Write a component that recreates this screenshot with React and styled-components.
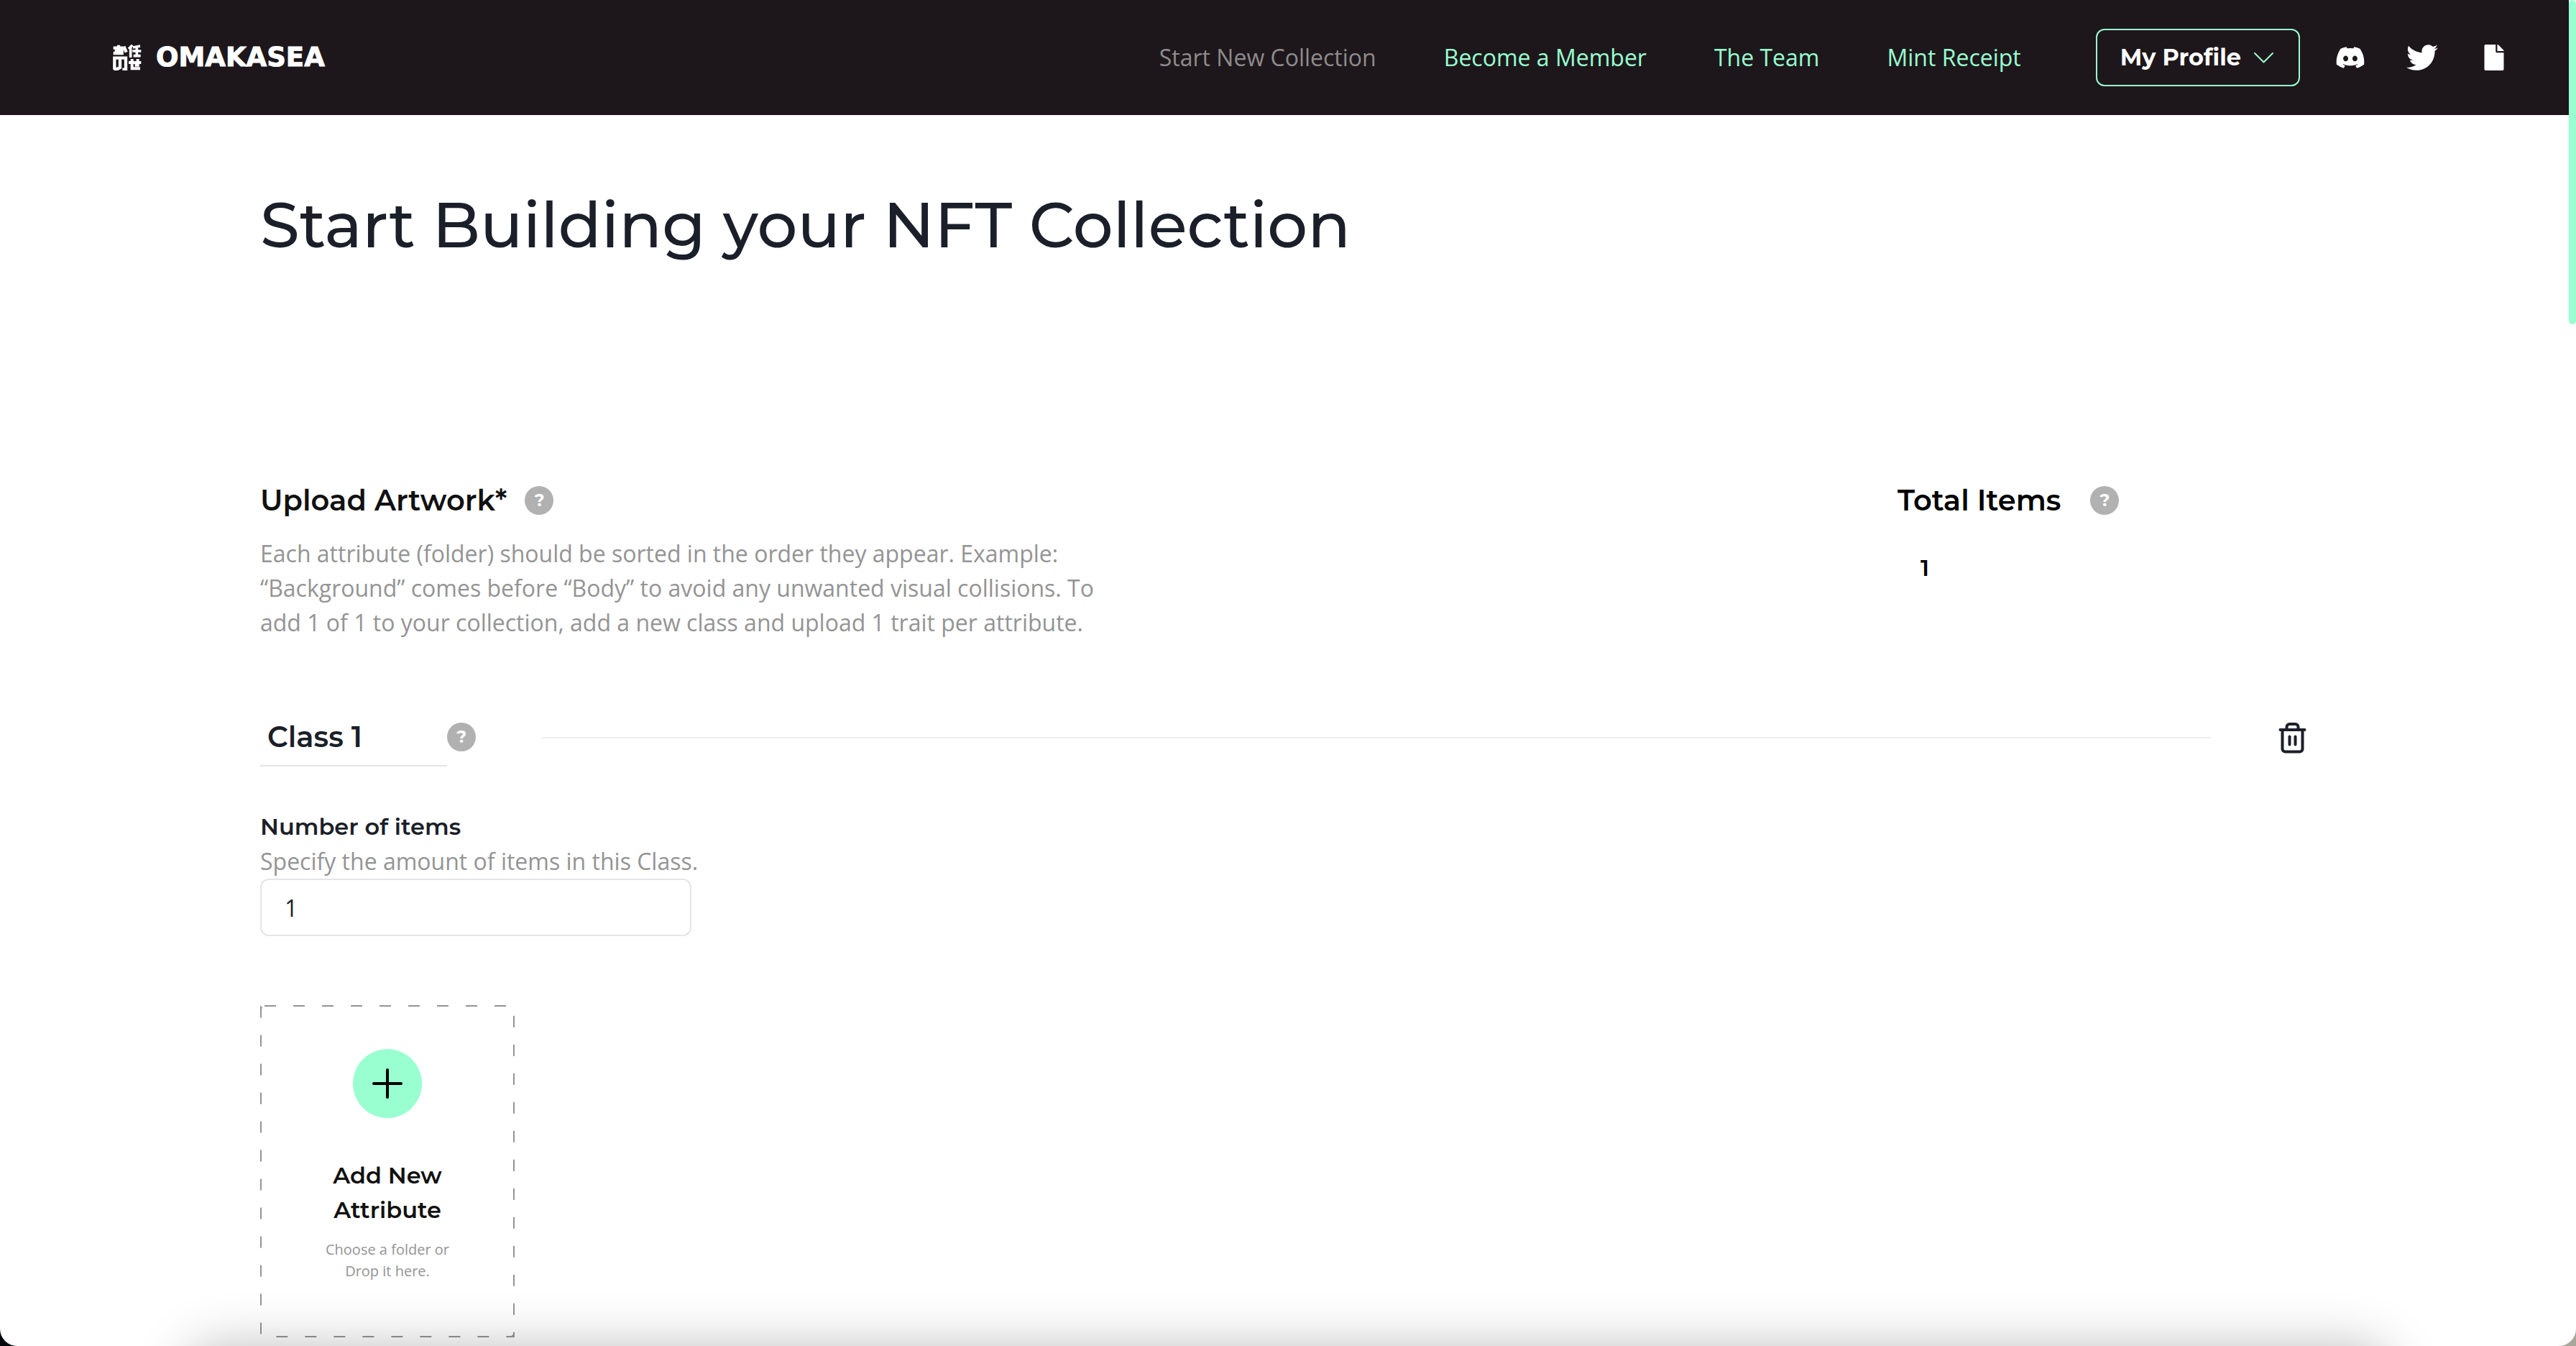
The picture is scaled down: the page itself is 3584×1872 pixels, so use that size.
import React, { useState } from "react";
import styled, { createGlobalStyle } from "styled-components";
import { FaDiscord, FaTwitter, FaFile } from "react-icons/fa";

const mint = "#99ffd0";
const ink = "#1b1f29";
const muted = "#949494";
const heading = `"Montserrat", "Inter", sans-serif`;
const body = `"Open Sans", "Noto Sans", sans-serif`;

const GlobalStyle = createGlobalStyle`
  *, *::before, *::after { box-sizing: border-box; }
  html { background: linear-gradient(to right, #05080d 50%, #a8a79a 50%); }
  body { margin: 0; font-family: ${body}; font-size: 32px; line-height: 48px; color: ${ink}; }
  h1, h2, p { margin: 0; }
  button, input { font: inherit; color: inherit; }
  button { cursor: pointer; }
`;

const Window = styled.div`
  position: relative;
  height: 100vh;
  overflow: hidden;
  padding-right: 10px;
  background: #fff;
  border-radius: 0 0 24px 24px;
`;

const ScrollThumb = styled.div`
  position: absolute;
  top: 0;
  right: 0;
  width: 10px;
  height: 451px;
  border-radius: 5px;
  background: ${mint};
`;

const BottomShade = styled.div`
  position: absolute;
  top: 100%;
  left: 260px;
  right: 260px;
  height: 200px;
  border-radius: 40px;
  box-shadow: 0 0 70px rgba(0, 0, 0, 0.25);
  pointer-events: none;
`;

const Header = styled.header`
  display: flex;
  align-items: center;
  height: 160px;
  padding: 0 54px 0 157px;
  background: #1d171b;
`;

const Logo = styled.a`
  display: flex;
  align-items: center;
  gap: 20px;
  margin-right: auto;
  color: #fff;
  text-decoration: none;
`;

const LogoName = styled.span`
  font-family: "DejaVu Sans", sans-serif;
  font-size: 37px;
  font-weight: 700;
  -webkit-text-stroke: 1px #fff;
`;

const Nav = styled.nav`
  display: flex;
  gap: 94px;
  margin-right: 104px;
`;

const NavLink = styled.a`
  color: ${(p) => (p.$current ? "#8e8b8d" : mint)};
  text-decoration: none;
  white-space: nowrap;
`;

const ProfileButton = styled.button`
  display: flex;
  align-items: center;
  gap: 18px;
  height: 80px;
  margin-right: 20px;
  padding: 0 35px 0 32px;
  border: 2px solid ${mint};
  border-radius: 12px;
  background: transparent;
  color: #fff;
  font-family: ${heading};
  font-weight: 700;
  white-space: nowrap;
`;

const SocialLink = styled.a`
  display: flex;
  justify-content: center;
  width: 100px;
  color: #fff;
`;

const Main = styled.main`
  padding: 105px 362px 12px;
`;

const Title = styled.h1`
  margin-bottom: 311px;
  font-family: ${heading};
  font-size: 88px;
  font-weight: 500;
  line-height: 96px;
`;

const Intro = styled.section`
  display: grid;
  grid-template-columns: 1fr 572px;
  margin-bottom: 94px;
`;

const HeadingRow = styled.div`
  display: flex;
  align-items: center;
  gap: ${(p) => p.$gap}px;
`;

const SectionTitle = styled.h2`
  font-family: ${heading};
  font-size: 40px;
  font-weight: 600;
  line-height: 48px;
  color: ${(p) => p.$color};
`;

const HelpButton = styled.button`
  flex: none;
  width: 40px;
  height: 40px;
  padding: 0;
  border: 0;
  border-radius: 50%;
  background: #b1b1b1;
  color: #fff;
  font-family: ${heading};
  font-size: 24px;
  font-weight: 700;
  line-height: 40px;
`;

const Description = styled.p`
  max-width: 1180px;
  margin-top: 26px;
  color: ${muted};
`;

const TotalValue = styled.p`
  margin-top: 46px;
  padding-left: 32px;
  color: #000;
  font-family: ${heading};
  font-weight: 600;
`;

const ClassRow = styled.div`
  display: flex;
  align-items: center;
  margin-bottom: 60px;
`;

const ClassNameInput = styled.input`
  width: 260px;
  height: 82px;
  padding: 0 10px;
  border: 0;
  border-bottom: 2px solid #e3e5e6;
  background: transparent;
  font-family: ${heading};
  font-size: 40px;
  font-weight: 600;
  outline: none;
`;

const Rule = styled.hr`
  flex: 1;
  height: 2px;
  margin: 2px 90px 0 92px;
  border: 0;
  background: #eeeeee;
`;

const TrashButton = styled.button`
  display: flex;
  padding: 0;
  border: 0;
  background: none;
`;

const Field = styled.div`
  display: flex;
  flex-direction: column;
  align-items: flex-start;
  margin-bottom: 96px;
`;

const FieldLabel = styled.label`
  font-family: ${heading};
  font-weight: 600;
`;

const FieldHint = styled.p`
  color: ${muted};
`;

const CountInput = styled.input`
  width: 600px;
  height: 80px;
  padding: 0 32px;
  border: 2px solid #e3e5e8;
  border-radius: 12px;
  background: #fff;
  outline: none;
`;

const DropZone = styled.button`
  position: relative;
  display: flex;
  flex-direction: column;
  align-items: center;
  width: 354px;
  height: 462px;
  padding: 61px 60px 0;
  border: 0;
  background: none;
`;

const DashedBorder = styled.svg`
  position: absolute;
  inset: 0;
  width: 100%;
  height: 100%;
  overflow: hidden;
`;

const PlusCircle = styled.span`
  display: flex;
  align-items: center;
  justify-content: center;
  width: 96px;
  height: 96px;
  margin-bottom: 56px;
  border-radius: 50%;
  background: ${mint};
`;

const DropTitle = styled.span`
  width: 200px;
  margin-bottom: 16px;
  color: #111;
  font-family: ${heading};
  font-weight: 600;
`;

const DropHint = styled.span`
  width: 190px;
  color: ${muted};
  font-size: 20px;
  line-height: 30px;
`;

const links = ["Start New Collection", "Become a Member", "The Team", "Mint Receipt"];
const socials = [
  { name: "Discord", icon: <FaDiscord size={42} /> },
  { name: "Twitter", icon: <FaTwitter size={44} /> },
  { name: "Documentation", icon: <FaFile size={36} /> },
];

function LogoMark() {
  return (
    <svg width="40" height="36" viewBox="0 0 120 108" fill="none" stroke="#fff" strokeWidth="11" aria-hidden="true">
      <path d="M2 14h42M24 2v34M2 36h36V27H8M46 8l10 24" strokeWidth="13" />
      <path d="M82 2L66 18M74 12v42M114 6L84 12M82 27h36M100 8v40M86 47h30" />
      <path d="M7 104V56h47v48h-14M30 56v40L18 102H4" strokeWidth="13" />
      <path d="M66 75h52M80 60v40h34M104 60v26h-12" strokeWidth="12" />
    </svg>
  );
}

function ChevronIcon() {
  return (
    <svg width="27" height="16" viewBox="0 0 27 16" fill="none" stroke={mint} strokeWidth="2" strokeLinecap="round" strokeLinejoin="round" aria-hidden="true">
      <path d="M1 2l12.500 12.500L26 2" />
    </svg>
  );
}

function TrashIcon() {
  return (
    <svg width="46" height="46" viewBox="0 0 46 46" fill="none" stroke={ink} strokeWidth="4" strokeLinecap="round" strokeLinejoin="round" aria-hidden="true">
      <path d="M6.500 13h34M9.500 13v26.500a4 4 0 0 0 4 4h20a4 4 0 0 0 4-4V13M15.500 13V9a4 4 0 0 1 4-4h8a4 4 0 0 1 4 4v4" />
      <path d="M19.500 22.500v11M27.500 22.500v11" />
    </svg>
  );
}

function PlusIcon() {
  return (
    <svg width="44" height="44" viewBox="0 0 44 44" stroke="#000" strokeWidth="4" strokeLinecap="round" aria-hidden="true">
      <path d="M22 3v38M3 22h38" />
    </svg>
  );
}

export default function App() {
  const [className, setClassName] = useState("Class 1");
  const [count, setCount] = useState("1");

  return (
    <>
      <GlobalStyle />
      <Window>
        <Header>
          <Logo href="#">
            <LogoMark />
            <LogoName>OMAKASEA</LogoName>
          </Logo>
          <Nav>
            {links.map((link, i) => (
              <NavLink key={link} href="#" $current={i === 0}>{link}</NavLink>
            ))}
          </Nav>
          <ProfileButton type="button">
            My Profile
            <ChevronIcon />
          </ProfileButton>
          {socials.map(({ name, icon }) => (
            <SocialLink key={name} href="#" aria-label={name}>{icon}</SocialLink>
          ))}
        </Header>

        <Main>
          <Title>Start Building your NFT Collection</Title>

          <Intro>
            <div>
              <HeadingRow $gap={25}>
                <SectionTitle $color="#111">Upload Artwork*</SectionTitle>
                <HelpButton type="button">?</HelpButton>
              </HeadingRow>
              <Description>
                Each attribute (folder) should be sorted in the order they appear. Example:
                “Background” comes before “Body” to avoid any unwanted visual collisions. To
                add 1 of 1 to your collection, add a new class and upload 1 trait per attribute.
              </Description>
            </div>
            <div>
              <HeadingRow $gap={41}>
                <SectionTitle $color="#000">Total Items</SectionTitle>
                <HelpButton type="button">?</HelpButton>
              </HeadingRow>
              <TotalValue>{count}</TotalValue>
            </div>
          </Intro>

          <ClassRow>
            <ClassNameInput aria-label="Class name" value={className} onChange={(e) => setClassName(e.target.value)} />
            <HelpButton type="button">?</HelpButton>
            <Rule />
            <TrashButton type="button" aria-label="Delete class">
              <TrashIcon />
            </TrashButton>
          </ClassRow>

          <Field>
            <FieldLabel htmlFor="item-count">Number of items</FieldLabel>
            <FieldHint>Specify the amount of items in this Class.</FieldHint>
            <CountInput id="item-count" inputMode="numeric" value={count} onChange={(e) => setCount(e.target.value)} />
          </Field>

          <DropZone type="button">
            <DashedBorder aria-hidden="true">
              <rect width="100%" height="100%" rx="6" ry="6" fill="none" stroke={muted} strokeWidth="4" strokeDasharray="16 24" />
            </DashedBorder>
            <PlusCircle>
              <PlusIcon />
            </PlusCircle>
            <DropTitle>Add New Attribute</DropTitle>
            <DropHint>Choose a folder or Drop it here.</DropHint>
          </DropZone>
        </Main>

        <BottomShade />
        <ScrollThumb />
      </Window>
    </>
  );
}
